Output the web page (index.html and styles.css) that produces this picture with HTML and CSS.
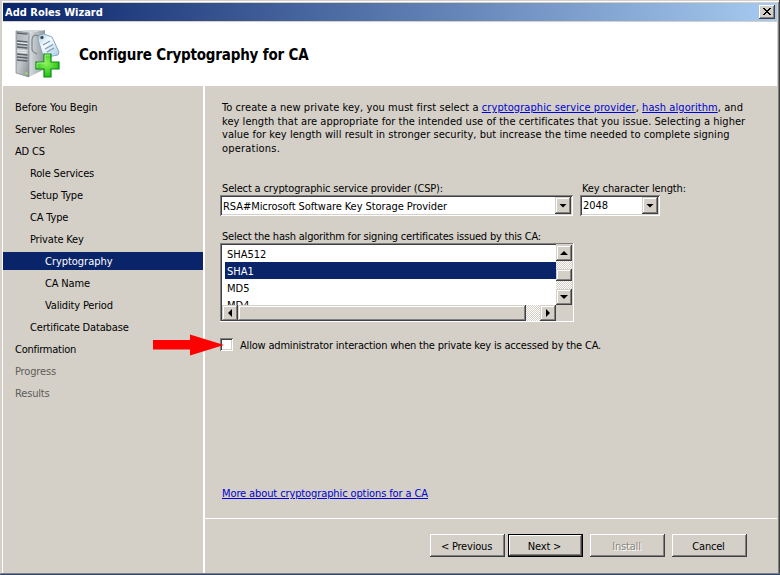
FILE: index.html
```html
<!DOCTYPE html>
<html lang="en">
<head>
<meta charset="utf-8">
<title>Add Roles Wizard</title>
<link rel="stylesheet" href="styles.css">
</head>
<body>
<div class="window">
  <div class="titlebar">
    <span class="title">Add Roles Wizard</span>
    <button class="close" aria-label="Close"><svg width="8" height="7" viewBox="0 0 8 7" shape-rendering="crispEdges"><path d="M0 0h2v1h1v1h2v-1h1v-1h2v1h-1v1h-1v1h-1v1h1v1h1v1h1v1h-2v-1h-1v-1h-2v1h-1v1h-2v-1h1v-1h1v-1h1v-1h-1v-1h-1v-1h-1z"/></svg></button>
  </div>
  <header class="header">
    <svg class="logo" width="46" height="50" viewBox="0 0 46 50">
      <defs>
        <linearGradient id="front" x1="0" y1="0" x2="1" y2="1"><stop offset="0" stop-color="#a9b1b6"/><stop offset=".5" stop-color="#c3c8cb"/><stop offset="1" stop-color="#858c91"/></linearGradient>
        <linearGradient id="side" x1="0" y1="0" x2="1" y2="0"><stop offset="0" stop-color="#dfe2e4"/><stop offset="1" stop-color="#8f979c"/></linearGradient>
        <linearGradient id="tag" x1="0" y1="0" x2="1" y2="1"><stop offset="0" stop-color="#aecbe0"/><stop offset=".4" stop-color="#f6fbff"/><stop offset="1" stop-color="#a9cbe8"/></linearGradient>
        <radialGradient id="plus" cx=".45" cy=".4" r=".65"><stop offset="0" stop-color="#8df25a"/><stop offset="1" stop-color="#17bd10"/></radialGradient>
      </defs>
      <path d="M13 4L30 1V40L14 48z" fill="url(#side)"/>
      <path d="M1 2L13 1 30 1 13 4z" fill="#cfd5d8"/>
      <path d="M1 2L14 4V48L1 44z" fill="url(#front)" stroke="#7c858a" stroke-width=".7"/>
      <path d="M2 4l10.500 1.200M2 12l10.500 1M2 15l10.500 1M2 18l10.500 1M2 25l10.500 1M2 28l10.500 1M2 31l10.500 1" stroke="#59636a" stroke-width="1.300"/>
      <path d="M2 13.500l10.500 1M2 21l10.500 1M2 23l10.500 1" stroke="#eef1f2"/>
      <path d="M25 8c-5-4-8-1-8 3v9c0 3 3 4 5 5" fill="none" stroke="#7b858b" stroke-width="1.200"/>
      <path d="M24 6l5-1 8 3 7 15-1 3-11 2-4-2-5-15z" fill="url(#tag)" stroke="#89a9c0"/>
      <circle cx="27" cy="8.500" r="1.700" fill="#43515c"/>
      <path d="M28 16l7-4M30 20l8-4.500M32 23l7-4" stroke="#7b98b4" stroke-width="1.200"/>
      <path d="M10.500 43.500h2v2h-2z" fill="#9af04f"/>
      <path d="M29 25h7v8h8v7h-8v8h-7v-8h-8v-7h8z" fill="url(#plus)" stroke="#0c8a10" stroke-width="1.200"/>
      <path d="M30 33v-7h5M22 39v-5h8" fill="none" stroke="#b6f99a" stroke-width=".8"/>
    </svg>
    <h1>Configure Cryptography for CA</h1>
  </header>
  <div class="body">
    <nav class="steps">
      <a class="s1">Before You Begin</a>
      <a class="s2">Server Roles</a>
      <a>AD CS</a>
      <a class="l2">Role Services</a>
      <a class="l2">Setup Type</a>
      <a class="l2">CA Type</a>
      <a class="l2">Private Key</a>
      <a class="l3 active">Cryptography</a>
      <a class="l3">CA Name</a>
      <a class="l3">Validity Period</a>
      <a class="l2">Certificate Database</a>
      <a class="s3">Confirmation</a>
      <a class="off">Progress</a>
      <a class="off">Results</a>
    </nav>
    <div class="right">
      <main class="content">
        <p class="intro"><span class="i1">To create a new private key, you must first select a <a href="#">cryptographic service provider</a>, <a href="#">hash algorithm</a>, and</span><br><span class="i2">key length that are appropriate for the intended use of the certificates that you issue. Selecting a higher</span><br><span class="i2">value for key length will result in stronger security, but increase the time needed to complete signing</span><br><span class="i4">operations.</span></p>
        <div class="fields">
          <div class="field csp">
            <label>Select a cryptographic service provider (CSP):</label>
            <div class="combo"><span>RSA#Microsoft Software Key Storage Provider</span><i class="btn"><b class="down"></b></i></div>
          </div>
          <div class="field key">
            <label>Key character length:</label>
            <div class="combo"><span>2048</span><i class="btn"><b class="down"></b></i></div>
          </div>
        </div>
        <label class="hash">Select the hash algorithm for signing certificates issued by this CA:</label>
        <div class="list">
          <ul>
            <li>SHA512</li>
            <li class="on">SHA1</li>
            <li>MD5</li>
            <li>MD4</li>
          </ul>
          <div class="vscroll"><i class="btn"><b class="up"></b></i><i class="track t1"></i><i class="btn vthumb"></i><i class="track t2"></i><i class="btn"><b class="down"></b></i></div>
          <div class="hscroll"><i class="btn"><b class="left"></b></i><i class="btn hthumb"></i><i class="track t3"></i><i class="btn"><b class="rgt"></b></i></div>
        </div>
        <div class="allow">
          <i class="check"></i><span>Allow administrator interaction when the private key is accessed by the CA.</span>
          <svg class="arrow" width="71" height="22" viewBox="0 0 71 22"><path d="M0 6h37V0.500L71 11 37 21.500V15.500H0z" fill="#f00"/></svg>
        </div>
        <a class="more" href="#">More about cryptographic options for a CA</a>
      </main>
      <footer class="footer">
        <button class="cmd">&lt; Previous</button>
        <button class="cmd default">Next &gt;</button>
        <button class="cmd disabled">Install</button>
        <button class="cmd">Cancel</button>
      </footer>
    </div>
  </div>
</div>
</body>
</html>
```
FILE: styles.css
```css
* { box-sizing: border-box; }
body {
  margin: 0;
  height: 575px;
  overflow: hidden;
  background: #2b4775;
  color: #000;
  font: 11px/13px "DejaVu Sans Condensed", "DejaVu Sans", sans-serif;
}
i, b { display: block; font-style: normal; }
a { color: #0000d4; }
.window {
  display: flex;
  flex-direction: column;
  width: 780px;
  height: 574px;
  padding: 2px 1px 0 1px;
  background: #d4d0c8;
  border-right: 1px solid #404040;
  border-bottom: 1px solid #808080;
  border-left: 1px solid #d4d0c8;
  box-shadow: inset 1px 1px #d4d0c8, inset 2px 2px #fff, inset -1px 0 #808080;
}
.titlebar {
  display: flex;
  align-items: center;
  justify-content: space-between;
  height: 18px;
  margin: 1px 1px 1px;
  padding: 0 2px 0 2px;
  background: linear-gradient(90deg, #0a246a, #a6caf0);
  color: #fff;
}
.title { font-weight: bold; }
.close {
  display: flex;
  align-items: center;
  justify-content: center;
  width: 16px;
  height: 14px;
  padding: 0 1px 1px 0;
  border: 0;
  background: #d4d0c8;
  box-shadow: inset -1px -1px #404040, inset 1px 1px #fff, inset -2px -2px #808080;
}
.header {
  display: flex;
  align-items: center;
  height: 64px;
  margin: 0 1px;
  padding-left: 12px;
  background: #fff;
}
.logo { margin-right: 18px; }
h1 { margin: 0; padding-top: 2px; font-size: 15px; line-height: 18px; letter-spacing: -.184px; }
.body { display: flex; flex: 1; margin: 0 1px; }
.steps {
  display: flex;
  flex-direction: column;
  gap: 4px;
  width: 202px;
  padding-top: 12px;
  border-right: 2px solid #fff;
}
.steps a { height: 18px; padding-left: 12px; color: #000; line-height: 20px; letter-spacing: -.16px; }
.steps .s1 { letter-spacing: -.076px; }
.steps .s3 { letter-spacing: -.25px; }
.steps .l2 { padding-left: 27px; }
.steps .l3 { padding-left: 42px; }
.steps .active { background: #0a246a; color: #fff; letter-spacing: -.03px; }
.steps .off { color: #5f5d58; }
.right { display: flex; flex-direction: column; flex: 1; }
.content { display: flex; flex-direction: column; align-items: flex-start; height: 432px; padding: 15px 0 0 15px; }
.intro { margin: 0 0 0 2px; line-height: 13.500px; white-space: nowrap; }
.i1 { letter-spacing: .071px; }
.i2 { letter-spacing: .043px; }
.i4 { letter-spacing: .199px; }
.fields { display: flex; gap: 7px; margin-top: 26px; }
.field label, .hash { display: block; height: 14px; padding-left: 2px; letter-spacing: -.151px; }
.field label { line-height: 15px; }
.key label { letter-spacing: -.117px; }
.csp { width: 353px; }
.combo {
  display: flex;
  align-items: center;
  justify-content: space-between;
  height: 21px;
  padding: 2px;
  background: #fff;
  letter-spacing: -.066px;
  box-shadow: inset 1px 1px #808080, inset -1px -1px #fff, inset 2px 2px #404040, inset -2px -2px #d4d0c8;
}
.combo span { padding-left: 1px; }
.csp .combo span { padding-top: 2px; }
.key .combo { width: 80px; }
.btn {
  display: flex;
  flex: none;
  align-items: center;
  justify-content: center;
  width: 16px;
  height: 16px;
  background: #d4d0c8;
  box-shadow: inset -1px -1px #404040, inset 1px 1px #d4d0c8, inset -2px -2px #808080, inset 2px 2px #fff;
}
.combo .btn { height: 17px; }
.up, .down { width: 8px; height: 4px; background: #000; }
.down { clip-path: polygon(0 0, 100% 0, 50% 100%); }
.up { clip-path: polygon(50% 0, 100% 100%, 0 100%); }
.left, .rgt { width: 4px; height: 8px; background: #000; }
.left { clip-path: polygon(100% 0, 100% 100%, 0 50%); }
.rgt { clip-path: polygon(0 0, 100% 50%, 0 100%); }
.hash { margin-top: 14px; height: 13px; letter-spacing: -.202px; }
.list {
  display: grid;
  grid-template: 60px 16px / 335px 16px;
  width: 354px;
  height: 79px;
  padding: 2px 1px 1px 1px;
  border: 0 solid #fff;
  border-width: 0 1px 1px 0;
  background: #d4d0c8;
  box-shadow: inset 1px 1px #808080;
}
.list ul {
  margin: 0;
  padding: 0 0 0 4px;
  overflow: hidden;
  background: #fff;
  list-style: none;
  box-shadow: inset 1px 0 #404040, 0 -1px #404040;
}
.list li { height: 17px; padding-left: 2px; line-height: 20px; }
.list .on { background: #0a246a; color: #fff; }
.vscroll { display: flex; flex-direction: column; }
.hscroll { display: flex; padding-left: 1px; box-shadow: inset 1px 0 #404040; }
.track { background: repeating-conic-gradient(#fff 0 25%, #d4d0c8 0 50%) 0 0 / 2px 2px; }
.t1 { height: 8px; }
.vthumb { height: 12px; }
.t2 { height: 8px; }
.hthumb { width: 288px; }
.t3 { width: 14px; }
.allow { display: flex; position: relative; gap: 7px; margin-top: 16px; height: 13px; line-height: 15px; white-space: nowrap; letter-spacing: -.191px; }
.check {
  width: 13px;
  height: 13px;
  background: #fff;
  box-shadow: inset 1px 1px #808080, inset -1px -1px #fff, inset 2px 2px #404040, inset -2px -2px #d4d0c8;
}
.arrow { position: absolute; left: -67px; top: -4px; }
.more { margin: auto 0 18px 2px; letter-spacing: -.109px; }
.footer {
  display: flex;
  flex: 1;
  align-items: flex-start;
  justify-content: flex-end;
  padding: 15px 30px 0 0;
  border-top: 1px solid #fff;
}
.cmd {
  width: 75px;
  height: 23px;
  margin-left: 7px;
  padding: 2px 2px 0 0;
  border: 0;
  background: #d4d0c8;
  color: #000;
  font: inherit;
  letter-spacing: -.2px;
  box-shadow: inset -1px -1px #404040, inset 1px 1px #fff, inset -2px -2px #808080;
}
.default {
  margin-left: 3px;
  box-shadow: inset 0 0 0 1px #000, inset -2px -2px #404040, inset 2px 2px #fff, inset -3px -3px #808080;
}
.disabled { color: #8a8882; text-shadow: 1px 1px #fff; }
```
